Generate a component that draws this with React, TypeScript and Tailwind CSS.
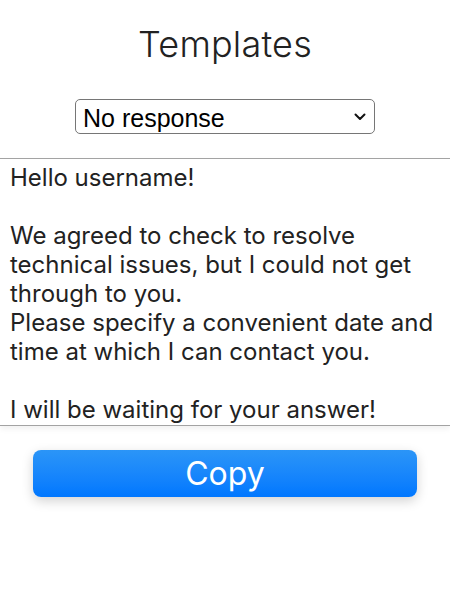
import React, { useState } from 'react';

const TEMPLATES: Record<string, string> = {
  'No response':
    'Hello username!\n\nWe agreed to check to resolve technical issues, but I could not get through to you.\nPlease specify a convenient date and time at which I can contact you.\n\nI will be waiting for your answer!',
  'Thank you':
    'Hello username!\n\nThank you for contacting us.',
};

const App: React.FC = () => {
  const [selected, setSelected] = useState('No response');
  const [text, setText] = useState(TEMPLATES['No response']);

  // Swap template text when the select changes
  const handleChange = (value: string) => {
    setSelected(value);
    setText(TEMPLATES[value]);
  };

  const handleCopy = () => {
    navigator.clipboard?.writeText(text).catch(() => {});
  };

  return (
    <div className="min-h-screen bg-white flex flex-col items-center font-['Inter',sans-serif] text-[#222222]">
      <h1 className="mt-[22px] text-[36px] leading-[44px] font-light tracking-[0.2px]">Templates</h1>

      <div className="relative mt-[33px] w-[300px]">
        <select
          value={selected}
          onChange={(e) => handleChange(e.target.value)}
          className="appearance-none w-full h-[35px] border border-[#767676] rounded-[5px] bg-white pl-[7px] pr-8 pt-[3px] text-[25px] leading-[30px] text-black font-['Liberation_Sans',Arial,sans-serif] outline-none"
        >
          {Object.keys(TEMPLATES).map((name) => (
            <option key={name} value={name}>
              {name}
            </option>
          ))}
        </select>
        <svg
          className="pointer-events-none absolute right-[9px] top-[14px]"
          width="12"
          height="8"
          viewBox="0 0 12 8"
          fill="none"
        >
          <path d="M1.5 1.5 6 6l4.5-4.5" stroke="#111" strokeWidth="2" strokeLinecap="round" strokeLinejoin="round" />
        </svg>
      </div>

      <textarea
        value={text}
        onChange={(e) => setText(e.target.value)}
        className="mt-[24px] w-full h-[268px] resize-none overflow-hidden border-y border-[#a3a3a3] bg-white px-[10px] pt-[4px] text-[24px] leading-[29px] text-[#222222] outline-none shadow-[0_3px_6px_rgba(0,0,0,0.06)] font-['Inter',sans-serif]"
      />

      <button
        type="button"
        onClick={handleCopy}
        className="mt-[24px] w-[384px] h-[47px] rounded-[8px] bg-gradient-to-b from-[#2b95f7] to-[#0077ff] text-white text-[32px] leading-[47px] font-normal shadow-[0_4px_12px_rgba(0,0,0,0.18)]"
      >
        Copy
      </button>
    </div>
  );
};

export default App;
